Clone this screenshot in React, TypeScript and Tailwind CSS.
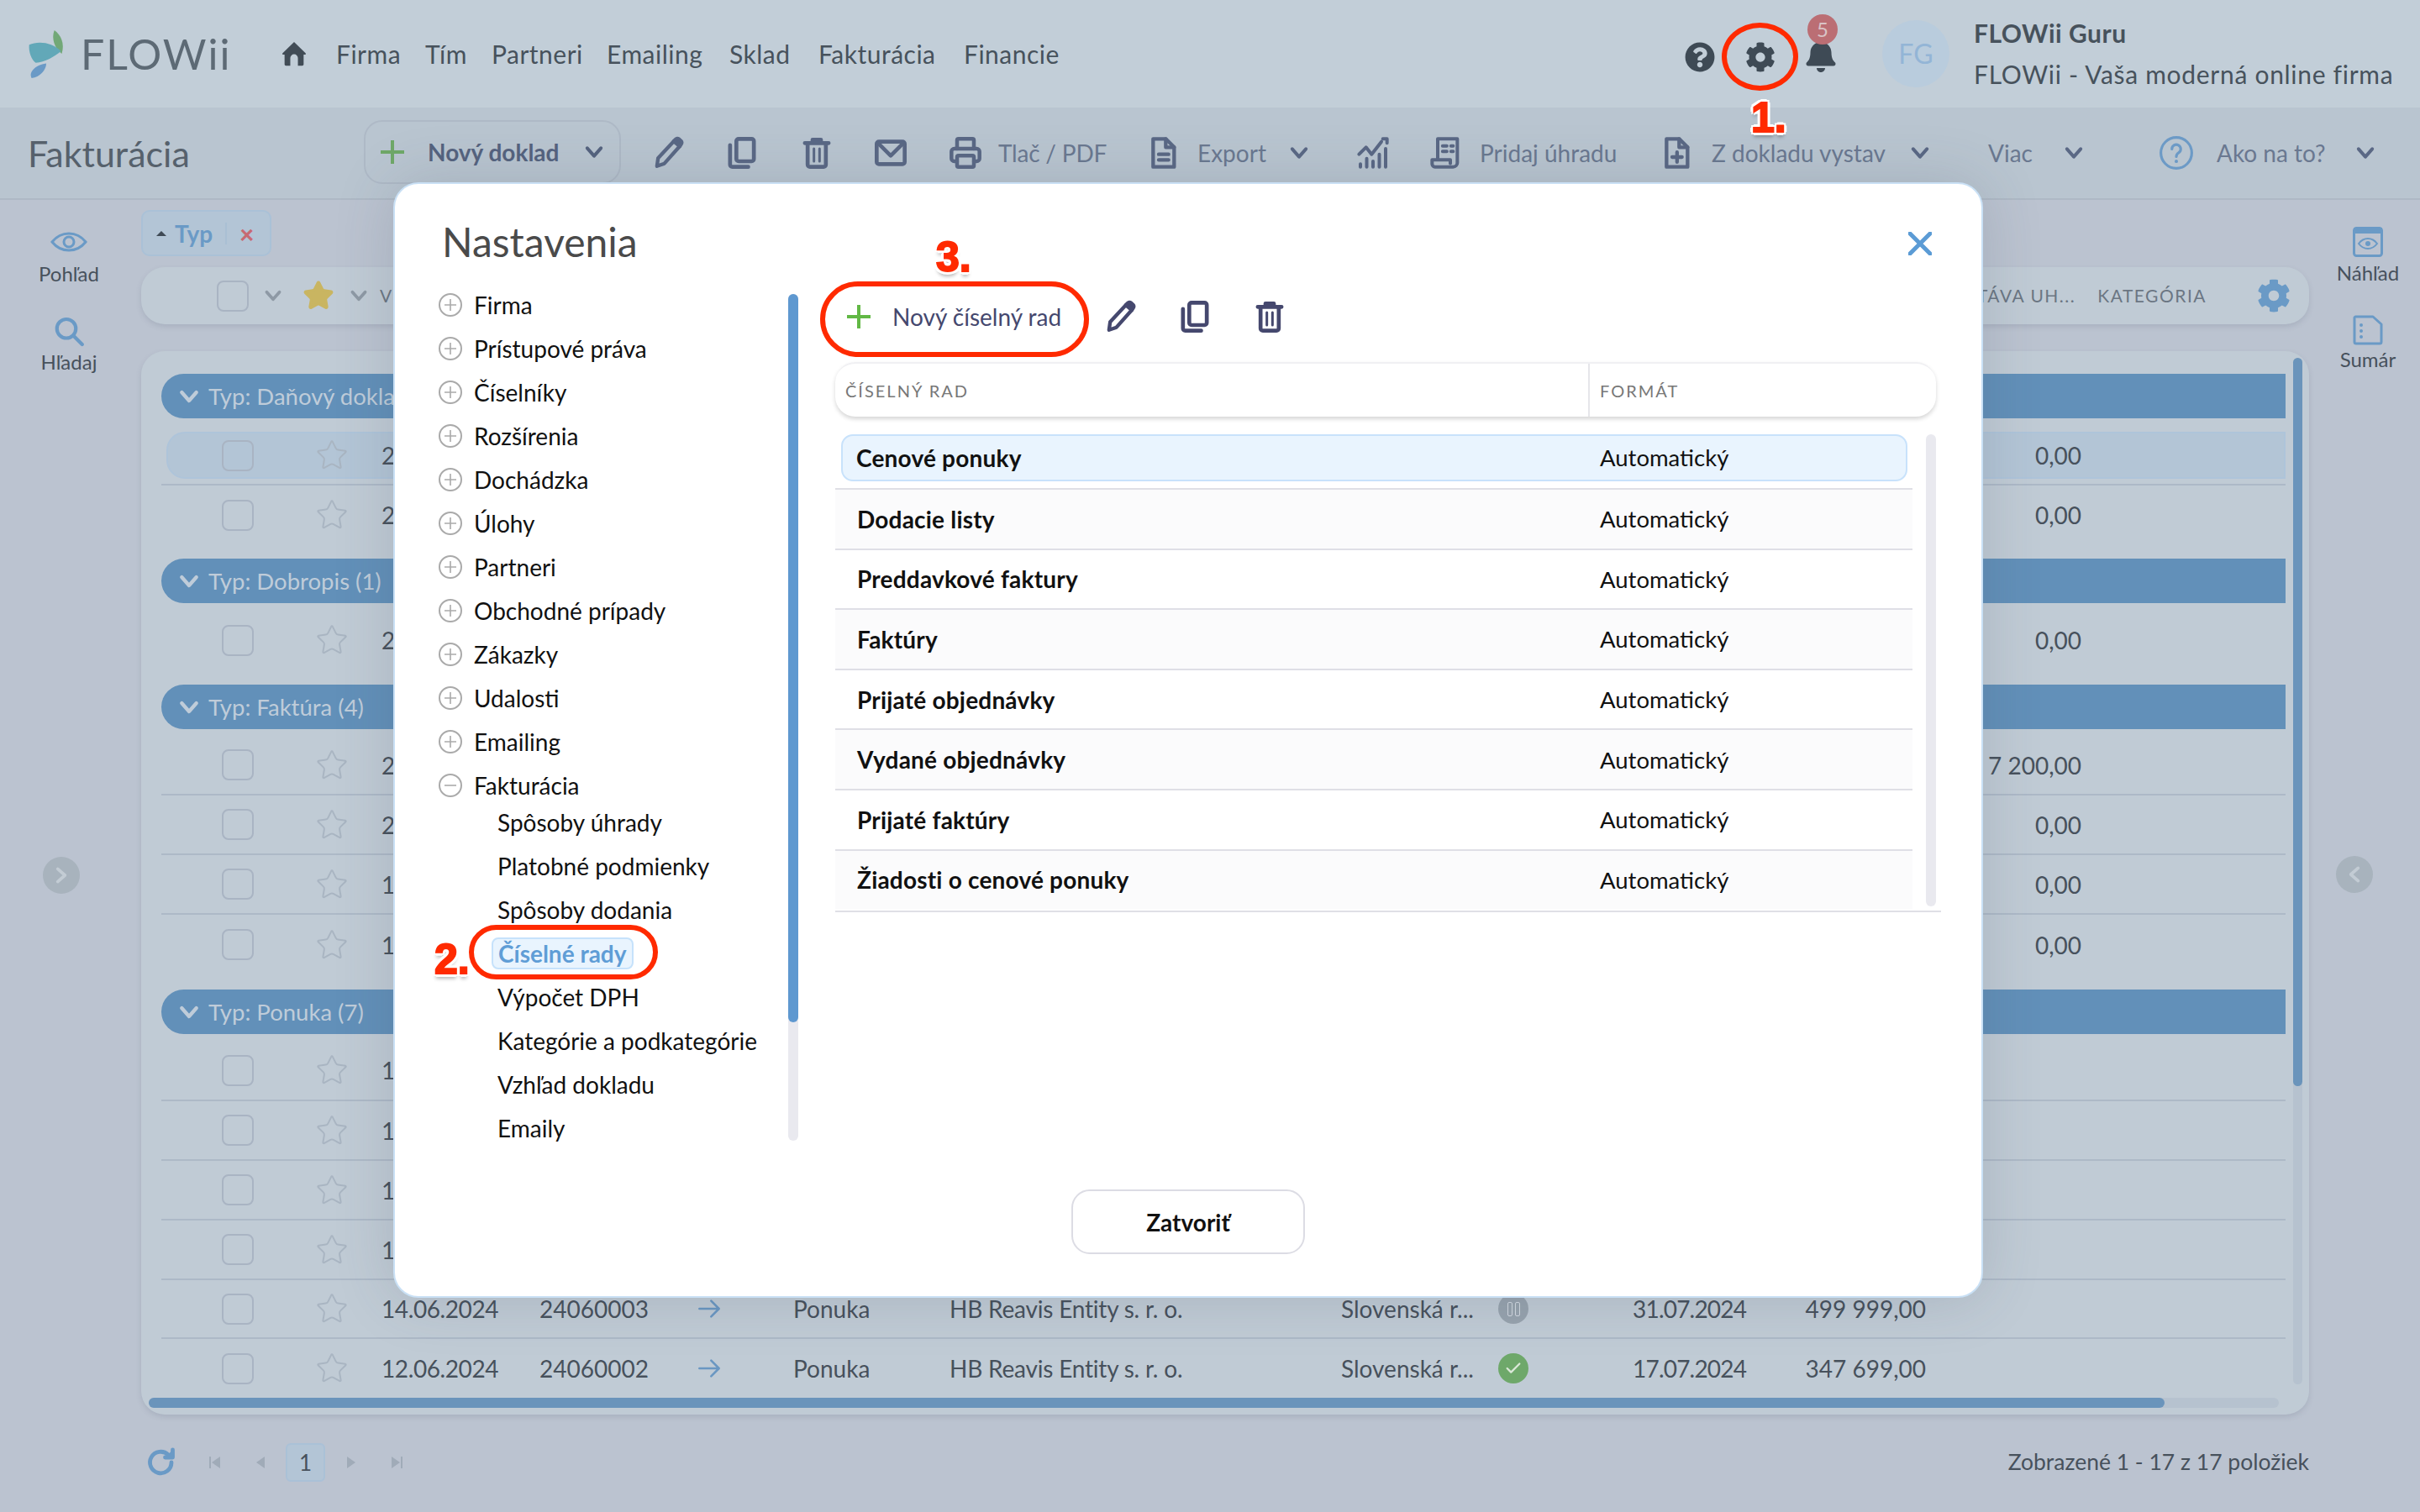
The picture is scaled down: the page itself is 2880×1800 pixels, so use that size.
import React from "react";
import { Star, Printer, Check } from "lucide-react";
import { FaCog, FaBell, FaQuestionCircle } from "react-icons/fa";

type I = { className?: string };
const Chev = ({ className = "" }: I) => (
  <svg viewBox="0 0 24 24" fill="none" stroke="currentColor" strokeWidth="3.4" strokeLinecap="round" strokeLinejoin="round" className={className}><path d="M5 8l7 8 7-8" /></svg>
);
const Pencil = ({ className = "" }: I) => (
  <svg viewBox="0 0 24 24" fill="none" stroke="currentColor" strokeWidth="2.6" strokeLinejoin="round" className={className}>
    <path d="M3.500 21.500l.8-5.700L15.600 3.600l4.200 3.600L8.800 19.600z" />
    <path d="M15.600 3.600l1.300-1.400a1.600 1.600 0 0 1 2.200-.1l1.600 1.400a1.600 1.600 0 0 1 .1 2.200L19.800 7.200z" fill="currentColor" />
  </svg>
);
const Copy = ({ className = "" }: I) => (
  <svg viewBox="0 0 24 24" fill="none" stroke="currentColor" strokeWidth="2.8" strokeLinejoin="round" strokeLinecap="round" className={className}>
    <rect x="8" y="2" width="12.500" height="16" rx="1.600" />
    <path d="M3.500 6.500V20.400A1.600 1.600 0 0 0 5.100 22H16.500" />
  </svg>
);
const Trash = ({ className = "" }: I) => (
  <svg viewBox="0 0 24 24" fill="none" stroke="currentColor" strokeWidth="2.8" strokeLinejoin="round" strokeLinecap="round" className={className}>
    <path d="M3.500 5h17M9 4.500V2.600h6v1.900" />
    <path d="M5.500 5.500V20.400A1.600 1.600 0 0 0 7.100 22h9.800a1.600 1.600 0 0 0 1.600-1.600V5.500" />
    <path d="M10 9v9M14 9v9" strokeWidth="1.800" />
  </svg>
);
const Mail = ({ className = "" }: I) => (
  <svg viewBox="0 0 24 24" fill="none" stroke="currentColor" strokeWidth="2.8" strokeLinejoin="round" strokeLinecap="round" className={className}>
    <rect x="2" y="4" width="20" height="16" rx="1.600" />
    <path d="M3 5l9 9 9-9" />
  </svg>
);
const Doc = ({ className = "", plus = false }: I & { plus?: boolean }) => (
  <svg viewBox="0 0 24 24" fill="none" stroke="currentColor" strokeWidth="2.600" strokeLinejoin="round" strokeLinecap="round" className={className}>
    <path d="M5 2h9l6 6v14H5z" />
    <path d="M14 2v6h6" />
    {plus ? <path d="M12.500 11.500v7M9 15h7" /> : <path d="M9 13h7M9 17h7" />}
  </svg>
);
const ChartI = ({ className = "" }: I) => (
  <svg viewBox="0 0 24 24" fill="none" stroke="currentColor" strokeWidth="2.400" strokeLinejoin="round" strokeLinecap="round" className={className}>
    <path d="M2 13l5-5 4 5 7-9" />
    <path d="M19 2h3v3" />
    <path d="M3 20v2M7.500 16v6M12 18v4M16.500 13v9M21 9v13" />
  </svg>
);
const Receipt = ({ className = "" }: I) => (
  <svg viewBox="0 0 24 24" fill="none" stroke="currentColor" strokeWidth="2.400" strokeLinejoin="round" strokeLinecap="round" className={className}>
    <path d="M6 17V2h14v17a3 3 0 0 1-3 3H4a2 2 0 0 1-2-2v-3h13v2.500" />
    <path d="M9.500 7h3M15.500 7h1.500M9.500 11h3M15.500 11h1.500" />
  </svg>
);
const Help = ({ className = "" }: I) => (
  <svg viewBox="0 0 24 24" fill="none" stroke="currentColor" strokeWidth="1.800" strokeLinecap="round" className={className}>
    <circle cx="12" cy="12" r="10.500" />
    <path d="M9 9.400a3 3 0 1 1 4.600 2.500c-1 .7-1.600 1.300-1.600 2.600" />
    <path d="M12 17.600v.2" strokeWidth="2.200" />
  </svg>
);
const Home = ({ className = "" }: I) => (
  <svg viewBox="0 0 24 24" fill="currentColor" className={className}>
    <path d="M12 2.200l9.600 9.200c.5.5.2 1.300-.5 1.300H20v8.100c0 .7-.5 1.200-1.200 1.200h-3.600v-6.400a3.200 3.200 0 0 0-6.400 0V22H5.200C4.500 22 4 21.500 4 20.800V12.700H2.900c-.7 0-1-.8-.5-1.300z" />
  </svg>
);
const Eye = ({ className = "" }: I) => (
  <svg viewBox="0 0 44 24" fill="none" stroke="currentColor" strokeWidth="3" className={className}>
    <path d="M2 12C8 4.500 15 2 22 2s14 2.500 20 10c-6 7.500-13 10-20 10S8 19.500 2 12z" />
    <circle cx="22" cy="12" r="6" />
  </svg>
);
const Search = ({ className = "" }: I) => (
  <svg viewBox="0 0 24 24" fill="none" stroke="currentColor" strokeWidth="2.800" strokeLinecap="round" className={className}>
    <circle cx="10" cy="9.500" r="7.500" />
    <path d="M15.500 15l7 7" />
  </svg>
);
const Circle = ({ minus = false }: { minus?: boolean }) => (
  <svg viewBox="0 0 28 28" fill="none" stroke="#aaaaaa" className="w-[28px] h-[28px] shrink-0">
    <circle cx="14" cy="14" r="13" strokeWidth="2" />
    <path d={minus ? "M7 14h14" : "M7 14h14M14 7v14"} strokeWidth="1.600" />
  </svg>
);
const Arrow = ({ className = "" }: I) => (
  <svg viewBox="0 0 24 24" fill="none" stroke="currentColor" strokeWidth="2.200" strokeLinecap="round" strokeLinejoin="round" className={className}>
    <path d="M2 12h19M14 4l8 8-8 8" />
  </svg>
);
const Box = () => <div className="w-[38px] h-[37px] rounded-[8px] border-2 border-[#a9b4c3] shrink-0" />;
const RowStar = () => <Star className="w-[40px] h-[40px] text-[#a9b5c2] shrink-0" strokeWidth={1.200} />;

const Row = ({ h, d, v, border, sel }: { h: string; d: string; v?: string; border?: boolean; sel?: boolean }) => (
  <div className={`${h} ${border ? "border-b-2 border-[#adb9c7]" : ""} relative flex items-center pl-[72px] pr-[243px] text-[#47515c] text-[28px] shrink-0`}>
    {sel && <div className="absolute left-[6px] right-0 top-0 h-[56px] rounded-l-[22px] bg-[#b3c5d6] border-2 border-[#aec4da]" />}
    <div className={`relative flex items-center ${sel ? "-mt-[6px]" : ""}`}>
      <Box />
      <div className="ml-[73px]"><RowStar /></div>
      <div className="ml-[39px]">{d}</div>
    </div>
    {v && <div className={`relative ml-auto ${sel ? "-mt-[6px]" : ""}`}>{v}</div>}
  </div>
);

const FullRow = ({ d, n, bad, end, amt, border }: { d: string; n: string; bad?: boolean; end: string; amt: string; border?: boolean }) => (
  <div className={`h-[70px] ${border ? "border-b-2 border-[#adb9c7]" : ""} flex items-center pl-[72px] text-[#47515c] text-[28px] shrink-0 whitespace-nowrap`}>
    <Box />
    <div className="ml-[73px]"><RowStar /></div>
    <div className="ml-[39px] w-[188px] tracking-[-.4px]">{d}</div>
    <div className="w-[188px]">{n}</div>
    <Arrow className="w-[28px] h-[28px] text-[#6a97c2] shrink-0" />
    <div className="ml-[86px] w-[186px]">Ponuka</div>
    <div className="w-[466px] tracking-[-.2px]">HB Reavis Entity s. r. o.</div>
    <div className="w-[187px]">Slovenská r...</div>
    {bad ? (
      <div className="w-[36px] h-[36px] rounded-full bg-[#97a3ae] flex items-center justify-center gap-[3px]">
        <span className="w-[6px] h-[17px] rounded-[2px] border border-[#d3dae2]" /><span className="w-[6px] h-[17px] rounded-[2px] border border-[#d3dae2]" />
      </div>
    ) : (
      <div className="w-[36px] h-[36px] rounded-full bg-[#6ea86a] flex items-center justify-center">
        <Check className="w-[22px] h-[22px] text-[#dbe8d8]" strokeWidth={2.500} />
      </div>
    )}
    <div className="ml-[124px] w-[172px] tracking-[-.8px]">{end}</div>
    <div className="w-[177px] text-right">{amt}</div>
  </div>
);

const Group = ({ t, mt }: { t: string; mt: string }) => (
  <div className={`${mt} h-[53px] rounded-l-full bg-[#6290b9] flex items-center pl-[18px] text-[#bfccd9] text-[27.500px] shrink-0`}>
    <Chev className="w-[30px] h-[30px] mr-[8px]" />
    <span>{t}</span>
  </div>
);

const Tree = ({ t }: { t: string }) => (
  <div className="h-[52px] flex items-center">
    <Circle />
    <span className="ml-[14px]">{t}</span>
  </div>
);
const Sub = ({ t }: { t: string }) => <div className="h-[52px] flex items-center pl-[70px]">{t}</div>;

const Set = ({ t, first }: { t: string; first?: boolean }) =>
  first ? (
    <div className="h-[64px] pl-[7px]">
      <div className="w-[1269px] h-[56px] rounded-[14px] bg-[#e9f4fe] border-2 border-[#c8e2fb] flex items-center text-[28px] text-[#111]">
        <div className="pl-[16px] w-[901px] font-bold tracking-[.2px]">{t}</div>
        <div className="text-[27.500px]">Automatický</div>
      </div>
    </div>
  ) : (
    <div className="h-[71.600px] border-t-2 border-[#dfdfe6] flex items-center text-[28px] text-[#111]">
      <div className="pl-[26px] w-[910px] font-bold tracking-[.2px]">{t}</div>
      <div className="text-[27.500px]">Automatický</div>
    </div>
  );

const red = "absolute border-[6px] border-[#ff2a00]";
const num = "absolute h-[44px] leading-[44px] font-['Liberation_Sans'] font-bold text-[#ff2a00] text-[50px] [-webkit-text-stroke:2px_#ff2a00] [text-shadow:4px_0_0_white,-4px_0_0_white,0_4px_0_white,0_-4px_0_white,3px_3px_0_white,-3px_3px_0_white,3px_-3px_0_white,-3px_-3px_0_white,0_6px_4px_rgba(0,0,0,.3)]";
const tbIcon = "w-[40px] h-[40px] shrink-0 text-[#5a6885]";
const tbChev = "w-[28px] h-[28px] shrink-0 text-[#5a6885]";

export default function App() {
  return (
    <div className="relative w-[2880px] h-[1800px] overflow-hidden bg-[#bbc3d0] font-['Lato','Noto_Sans',sans-serif] flex flex-col">
      {/* header */}
      <div className="h-[128px] shrink-0 bg-[#c2ced8] flex items-center text-[30px] text-[#47525c] whitespace-nowrap">
        <svg viewBox="0 0 48 62" className="ml-[33px] w-[48px] h-[60px] shrink-0">
          <path d="M32 2c8 6 13 16 9 29C32 24 28 12 32 2z" fill="#72a877" />
          <path d="M1 20C12 15 30 17 40 28 33 34 20 42 9 42 4 39 0 29 1 20z" fill="#62a8b8" />
          <path d="M22 43c0 8-8 17-18 18C0 54 8 45 22 43z" fill="#6a9ac6" />
        </svg>
        <div className="ml-[15px] w-[237px] text-[50px] font-normal tracking-[2px] text-[#5d6a75] leading-none">FLOWii</div>
        <Home className="w-[34px] h-[34px] text-[#414c56] shrink-0" />
        <div className="ml-[33px] w-[106px] tracking-[.5px]">Firma</div>
        <div className="w-[79px] tracking-[.5px]">Tím</div>
        <div className="w-[137px] tracking-[.5px]">Partneri</div>
        <div className="w-[146px] tracking-[.5px]">Emailing</div>
        <div className="w-[106px] tracking-[.5px]">Sklad</div>
        <div className="w-[173px] tracking-[.5px]">Fakturácia</div>
        <div className="w-[117px] tracking-[.5px]">Financie</div>
        <div className="ml-auto flex items-center pr-[31px]">
          <FaQuestionCircle className="w-[36px] h-[36px] text-[#3e4a55] mt-[8px]" />
          <FaCog className="ml-[36px] w-[36px] h-[36px] text-[#3e4a55] mt-[8px]" />
          <div className="relative ml-[36px] mt-[4px]">
            <FaBell className="w-[36px] h-[40px] text-[#3e4a55]" />
            <div className="absolute -top-[29px] left-[2px] w-[36px] h-[36px] rounded-full bg-[#bb6e74] text-[#d9c3c6] text-[24px] flex items-center justify-center">5</div>
          </div>
          <div className="ml-[55px] w-[80px] h-[80px] rounded-full bg-[#b9ccdd] text-[#93b5d6] text-[32px] flex items-center justify-center">FG</div>
          <div className="ml-[29px] w-[500px]">
            <div className="font-bold leading-[49px] tracking-[.5px]">FLOWii Guru</div>
            <div className="leading-[49px] tracking-[.7px]">FLOWii - Vaša moderná online firma</div>
          </div>
        </div>
      </div>

      {/* toolbar */}
      <div className="h-[110px] shrink-0 bg-[#b9c5d0] border-b-2 border-[#aeb9c5] flex items-center pl-[33px] text-[#6a7890] text-[28px] whitespace-nowrap">
        <div className="w-[400px] text-[43px] text-[#56616c] leading-none">Fakturácia</div>
        <div className="w-[306px] h-[76px] -mt-[3px] rounded-[22px] border-2 border-[#aeb9c6] flex items-center pl-[18px] shrink-0">
          <svg viewBox="0 0 28 28" stroke="#6fa868" strokeWidth="4" className="w-[28px] h-[28px]"><path d="M14 0v28M0 14h28" /></svg>
          <span className="ml-[28px] w-[184px] font-bold text-[#55637f]">Nový doklad</span>
          <Chev className="w-[28px] h-[28px] text-[#55637f]" />
        </div>
        <Pencil className={`ml-[37px] ${tbIcon}`} />
        <Copy className={`ml-[47px] ${tbIcon}`} />
        <Trash className={`ml-[49px] ${tbIcon}`} />
        <Mail className={`ml-[48px] ${tbIcon}`} />
        <Printer className={`ml-[49px] ${tbIcon}`} strokeWidth={2.700} />
        <span className="ml-[19px] w-[125px] tracking-[-.2px]">Tlač / PDF</span>
        <Doc className={`ml-[51px] ${tbIcon}`} />
        <span className="ml-[21px] w-[80px]">Export</span>
        <Chev className={`ml-[27px] ${tbChev}`} />
        <ChartI className={`ml-[54px] ${tbIcon}`} />
        <Receipt className={`ml-[47px] ${tbIcon}`} />
        <span className="ml-[20px] w-[162px]">Pridaj úhradu</span>
        <Doc plus className={`ml-[52px] ${tbIcon}`} />
        <span className="ml-[22px] w-[206px]">Z dokladu vystav</span>
        <Chev className={`ml-[28px] ${tbChev}`} />
        <span className="ml-[67px] w-[54px]">Viac</span>
        <Chev className={`ml-[34px] ${tbChev}`} />
        <Help className="ml-[87px] w-[42px] h-[42px] shrink-0 text-[#6c9ac6]" />
        <span className="ml-[27px] w-[129px]">Ako na to?</span>
        <Chev className={`ml-[34px] ${tbChev}`} />
      </div>

      {/* body */}
      <div className="flex flex-1 min-h-0">
        <div className="w-[168px] shrink-0 flex flex-col items-center text-[24px] text-[#47515c] pr-[4px]">
          <Eye className="mt-[35px] w-[44px] h-[30px] text-[#6a9ac6]" />
          <div className="mt-[8px] leading-[30px]">Pohľad</div>
          <Search className="mt-[36px] w-[36px] h-[36px] text-[#6a9ac6]" />
          <div className="mt-[3px] leading-[30px]">Hľadaj</div>
          <div className="mt-[574px] -ml-[18px] w-[44px] h-[44px] rounded-full bg-[#a8b3bd] flex items-center justify-center">
            <Chev className="w-[26px] h-[26px] -rotate-90 text-[#c3ccd4]" />
          </div>
        </div>

        <div className="w-[2580px] shrink-0 flex flex-col">
          <div className="mt-[12px] w-[155px] h-[55px] rounded-[10px] bg-[#b3c5d6] border-2 border-[#aac1d7] flex items-center pl-[16px]">
            <span className="w-0 h-0 border-x-[6px] border-x-transparent border-b-[6px] border-b-[#3f4a55]" />
            <span className="ml-[10px] text-[#6a9ac6] font-bold text-[28px]">Typ</span>
            <span className="ml-[15px] w-[2px] h-[26px] bg-[#a9bfd4]" />
            <span className="ml-[15px] text-[#c76a72] font-black text-[30px] leading-none">×</span>
          </div>
          <div className="mt-[13px] h-[68px] rounded-[28px] bg-[#c0cbd5] shadow-[0_3px_6px_rgba(90,100,120,.18)] flex items-center pl-[90px] text-[21px] tracking-[1.500px] text-[#6b7683]">
            <Box />
            <Chev className="ml-[16px] w-[26px] h-[26px] text-[#8e99a5]" />
            <Star className="ml-[22px] w-[38px] h-[38px] text-[#c9b561]" fill="#c9b561" />
            <Chev className="ml-[16px] w-[26px] h-[26px] text-[#8e99a5]" />
            <span className="ml-[12px]">V</span>
            <span className="ml-auto">TÁVA UH...</span>
            <span className="ml-[26px]">KATEGÓRIA</span>
            <FaCog className="ml-[60px] mr-[22px] w-[40px] h-[40px] text-[#6a9ac6]" />
          </div>
          <div className="relative mt-[32px] h-[1266px] rounded-[28px] bg-[#c0cbd5] shadow-[0_3px_6px_rgba(90,100,120,.18)] pl-[24px] pr-[28px] pt-[27px] flex flex-col overflow-hidden">
            <Group t="Typ: Daňový doklad (2)" mt="" />
            <Row sel border h="mt-[16px] h-[64px]" d="2" v="0,00" />
            <Row h="h-[70px]" d="2" v="0,00" />
            <Group t="Typ: Dobropis (1)" mt="mt-[17px]" />
            <Row h="mt-[9px] h-[70px]" d="2" v="0,00" />
            <Group t="Typ: Faktúra (4)" mt="mt-[18px]" />
            <Row border h="mt-[8px] h-[71px]" d="2" v="7 200,00" />
            <Row border h="h-[71px]" d="2" v="0,00" />
            <Row border h="h-[71px]" d="1" v="0,00" />
            <Row h="h-[71px]" d="1" v="0,00" />
            <Group t="Typ: Ponuka (7)" mt="mt-[18px]" />
            <Row border h="mt-[8px] h-[72px]" d="1" />
            <Row border h="h-[71px]" d="1" />
            <Row border h="h-[71px]" d="1" />
            <Row border h="h-[71px]" d="1" />
            <FullRow border d="14.06.2024" n="24060003" bad end="31.07.2024" amt="499 999,00" />
            <FullRow d="12.06.2024" n="24060002" end="17.07.2024" amt="347 699,00" />
            <div className="absolute right-[8px] top-[8px] w-[11px] h-[1222px] rounded-full bg-[#b6c2cf]">
              <div className="w-full h-[867px] rounded-full bg-[#6a94bb]" />
            </div>
            <div className="absolute left-[9px] bottom-[8px] w-[2535px] h-[12px] rounded-full bg-[#b6c2cf]">
              <div className="w-[2399px] h-full rounded-full bg-[#6a94bb]" />
            </div>
          </div>
          <div className="mt-[34px] h-[46px] flex items-center text-[#47515c]">
            <svg viewBox="0 0 24 24" fill="none" stroke="#6a9ac6" strokeWidth="3.200" strokeLinecap="round" className="w-[36px] h-[36px] ml-[6px] shrink-0">
              <path d="M20 12a8.500 8.500 0 1 1-2.500-6" />
              <path d="M21 2v6h-6" fill="#6a9ac6" strokeLinejoin="round" />
            </svg>
            <svg viewBox="0 0 16 16" fill="#a0abb8" className="ml-[37px] w-[16px] h-[16px]"><path d="M2 1h2v14H2zM15 1v14L5 8z" /></svg>
            <svg viewBox="0 0 16 16" fill="#a0abb8" className="ml-[39px] w-[16px] h-[16px]"><path d="M13 1v14L3 8z" /></svg>
            <div className="ml-[22px] w-[47px] h-[46px] rounded-[6px] bg-[#b3c5d6] border-2 border-[#aac1d7] flex items-center justify-center text-[26px]">1</div>
            <svg viewBox="0 0 16 16" fill="#a0abb8" className="ml-[23px] w-[16px] h-[16px]"><path d="M3 1v14L13 8z" /></svg>
            <svg viewBox="0 0 16 16" fill="#a0abb8" className="ml-[39px] w-[16px] h-[16px]"><path d="M1 1v14L11 8zM12 1h2v14h-2z" /></svg>
            <div className="ml-auto text-[26.500px]">Zobrazené 1 - 17 z 17 položiek</div>
          </div>
        </div>

        <div className="w-[132px] shrink-0 flex flex-col items-center text-[24px] text-[#47515c] pl-[8px]">
          <svg viewBox="0 0 36 36" className="mt-[32px] w-[36px] h-[36px]" fill="none">
            <rect x="1.500" y="1.500" width="33" height="33" rx="3" stroke="#6a9ac6" strokeWidth="3" />
            <rect x="1" y="1" width="34" height="7" fill="#6a9ac6" />
            <path d="M7 20c3-4 7-6 11-6s8 2 11 6c-3 4-7 6-11 6s-8-2-11-6z" stroke="#6a9ac6" strokeWidth="2" />
            <circle cx="18" cy="20" r="3" fill="#6a9ac6" />
          </svg>
          <div className="mt-[4px] leading-[30px]">Náhľad</div>
          <svg viewBox="0 0 36 36" className="mt-[35px] w-[36px] h-[36px]" fill="none">
            <path d="M3 2h21l10 9v21a2 2 0 0 1-2 2H4a2 2 0 0 1-2-2V3z" stroke="#6a9ac6" strokeWidth="3" strokeLinejoin="round" />
            <circle cx="10" cy="12" r="2" fill="#6a9ac6" /><circle cx="10" cy="19" r="2" fill="#6a9ac6" /><circle cx="10" cy="26" r="2" fill="#6a9ac6" />
          </svg>
          <div className="mt-[2px] leading-[30px]">Sumár</div>
          <div className="mt-[576px] -ml-[32px] w-[44px] h-[44px] rounded-full bg-[#a8b3bd] flex items-center justify-center">
            <Chev className="w-[26px] h-[26px] rotate-90 text-[#c3ccd4]" />
          </div>
        </div>
      </div>

      {/* modal */}
      <div className="absolute left-[468px] top-[217px] w-[1892px] h-[1328px] rounded-[30px] bg-white border-2 border-[#c9e0f5] shadow-[0_0_70px_rgba(60,70,90,.18)] flex flex-col">
        <div className="h-[120px] pt-[40px] pl-[56px] flex items-start justify-between shrink-0">
          <div className="text-[48px] leading-[58px] text-[#4a4a4a]">Nastavenia</div>
          <svg viewBox="0 0 28 28" stroke="#5b9bd5" strokeWidth="5" strokeLinecap="round" className="mt-[17px] mr-[59px] w-[28px] h-[28px]"><path d="M2 2l24 24M26 2L2 26" /></svg>
        </div>
        <div className="h-[1077px] flex shrink-0">
          <div className="relative w-[472px] ml-[52px] -mt-[2px] shrink-0 text-[28px] text-[#111] whitespace-nowrap">
            {["Firma", "Prístupové práva", "Číselníky", "Rozšírenia", "Dochádzka", "Úlohy", "Partneri", "Obchodné prípady", "Zákazky", "Udalosti", "Emailing"].map((t) => <Tree key={t} t={t} />)}
            <div className="h-[52px] flex items-center"><Circle minus /><span className="ml-[14px]">Fakturácia</span></div>
            <div className="-mt-[8px]">
              <Sub t="Spôsoby úhrady" />
              <Sub t="Platobné podmienky" />
              <Sub t="Spôsoby dodania" />
              <div className="h-[52px] flex items-center pl-[63px]">
                <span className="h-[38px] px-[6px] flex items-center rounded-[8px] bg-[#e9f4fe] border-2 border-[#c6e2fb] font-bold text-[#5f9dd6]">Číselné rady</span>
              </div>
              <Sub t="Výpočet DPH" />
              <Sub t="Kategórie a podkategórie" />
              <Sub t="Vzhľad dokladu" />
              <Sub t="Emaily" />
            </div>
            <div className="absolute left-[416px] top-[13px] w-[12px] h-[1008px] rounded-full bg-[#e9e9ef]">
              <div className="w-full h-[867px] rounded-full bg-[#5e98d0]" />
            </div>
          </div>
          <div className="relative w-[1316px] shrink-0">
            <div className="h-[76px] flex items-center pl-[14px] text-[#45486e] text-[28px]">
              <svg viewBox="0 0 28 28" stroke="#62b845" strokeWidth="4" className="w-[28px] h-[28px] shrink-0"><path d="M14 0v28M0 14h28" /></svg>
              <span className="ml-[26px] w-[252px] whitespace-nowrap">Nový číselný rad</span>
              <Pencil className="w-[40px] h-[40px] shrink-0" />
              <Copy className="ml-[48px] w-[40px] h-[40px] shrink-0" />
              <Trash className="ml-[49px] w-[40px] h-[40px] shrink-0" />
            </div>
            <div className="mt-[16px] w-[1310px] h-[65px] rounded-[24px] border-t-2 border-[#f0f0f3] shadow-[0_3px_5px_rgba(0,0,0,.16)] flex items-center text-[20px] tracking-[2px] text-[#777]">
              <div className="pl-[12px] w-[898px] h-full flex items-center border-r-2 border-[#e6e6ea]">ČÍSELNÝ RAD</div>
              <div className="pl-[12px]">FORMÁT</div>
            </div>
            <div className="relative mt-[21px] w-[1316px] border-b-2 border-[#dfdfe6] pb-[2px]">
              <div className="w-[1282px] [&>*:nth-child(even)]:bg-[#fbfbfc]">
                <Set first t="Cenové ponuky" />
                <Set t="Dodacie listy" />
                <Set t="Preddavkové faktury" />
                <Set t="Faktúry" />
                <Set t="Prijaté objednávky" />
                <Set t="Vydané objednávky" />
                <Set t="Prijaté faktúry" />
                <Set t="Žiadosti o cenové ponuky" />
              </div>
              <div className="absolute right-[6px] top-0 w-[12px] h-[562px] rounded-full bg-[#e9e9ef]" />
            </div>
          </div>
        </div>
        <button className="self-center w-[278px] h-[77px] rounded-[22px] border-2 border-[#dcdce4] text-[28px] font-bold text-[#111] shrink-0">Zatvoriť</button>
      </div>

      {/* annotations */}
      <div className={`${red} left-[2049px] top-[27px] w-[91px] h-[81px] rounded-[50%]`} />
      <div className={`${num} left-[2084px] top-[118px]`}>1.</div>
      <div className={`${red} left-[558px] top-[1101px] w-[225px] h-[65px] rounded-[33px]`} />
      <div className={`${num} left-[517px] top-[1120px]`}>2.</div>
      <div className={`${red} left-[976px] top-[335px] w-[320px] h-[90px] rounded-[45px]`} />
      <div className={`${num} left-[1114px] top-[284px]`}>3.</div>
    </div>
  );
}
